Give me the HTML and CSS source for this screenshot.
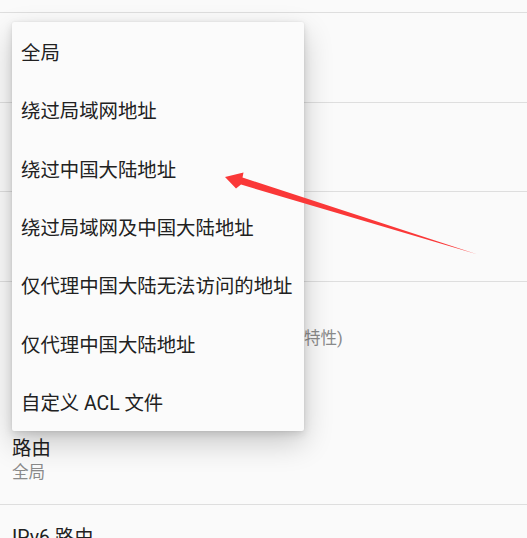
FILE: index.html
```html
<!DOCTYPE html>
<html lang="zh-CN">
<head>
<meta charset="utf-8">
<title>路由设置</title>
<link rel="stylesheet" href="styles.css">
</head>
<body>
<div class="screen">
  <div class="list">
    <div class="row row-partial"></div>
    <div class="row">
      <div class="title">服务器</div>
      <div class="summary">198.51.100.7</div>
    </div>
    <div class="row">
      <div class="title">远程端口</div>
      <div class="summary">8388</div>
    </div>
    <div class="row">
      <div class="title">密码</div>
      <div class="summary">********</div>
    </div>
    <div class="row row-plain">
      <div class="title">局域网共享</div>
      <div class="summary">允许局域网内设备连接到本机代理 (实验特性)<br>需要重新连接生效<br>默认关闭</div>
    </div>
    <div class="row">
      <div class="title">路由</div>
      <div class="summary">全局</div>
    </div>
    <div class="row">
      <div class="title">IPv6 路由</div>
      <div class="summary">关闭</div>
    </div>
  </div>

  <div class="menu">
    <div class="menu-item">全局</div>
    <div class="menu-item">绕过局域网地址</div>
    <div class="menu-item">绕过中国大陆地址</div>
    <div class="menu-item">绕过局域网及中国大陆地址</div>
    <div class="menu-item">仅代理中国大陆无法访问的地址</div>
    <div class="menu-item">仅代理中国大陆地址</div>
    <div class="menu-item">自定义 ACL 文件</div>
  </div>

  <svg class="arrow" width="527" height="538" viewBox="0 0 527 538" xmlns="http://www.w3.org/2000/svg">
    <path d="M225 177 L243.5 172.5 L242.5 177.6 L477 254.3 L241 184.6 L236 188.5 Z" fill="#fa3838"/>
  </svg>
</div>
</body>
</html>
```
FILE: styles.css
```css
html, body {
  margin: 0;
  padding: 0;
  background: #fafafa;
}

body {
  font-family: Roboto, "Noto Sans CJK SC", "Noto Sans", sans-serif;
  color: #212121;
  overflow: hidden;
}

.screen {
  position: relative;
  width: 527px;
  height: 538px;
  overflow: hidden;
}

.list {
  display: flex;
  flex-direction: column;
}

.row {
  display: flex;
  flex-direction: column;
  padding: 20.3px 12px 20.3px 12px;
  border-bottom: 1px solid #dedede;
}

.row-partial {
  height: 13px;
  padding: 0;
  box-sizing: border-box;
}

.row-plain {
  border-bottom-color: transparent;
}

.title {
  font-size: 19.4px;
  line-height: 26px;
  color: #212121;
  white-space: nowrap;
}

.summary {
  font-size: 16.6px;
  line-height: 22px;
  color: #8a8a8a;
  white-space: nowrap;
}

.menu {
  position: absolute;
  left: 12px;
  top: 22px;
  width: 292px;
  height: 409px;
  display: flex;
  flex-direction: column;
  background: #fbfbfb;
  border-radius: 2px;
  box-shadow: 0 12px 30px rgba(0, 0, 0, 0.20), 0 3px 8px rgba(0, 0, 0, 0.12), 0 0 2px rgba(0, 0, 0, 0.08);
}

.menu-item {
  flex: 1;
  display: flex;
  align-items: center;
  padding-left: 9px;
  font-size: 19.4px;
  color: #212121;
  white-space: nowrap;
}

.arrow {
  position: absolute;
  left: 0;
  top: 0;
  pointer-events: none;
}
```
